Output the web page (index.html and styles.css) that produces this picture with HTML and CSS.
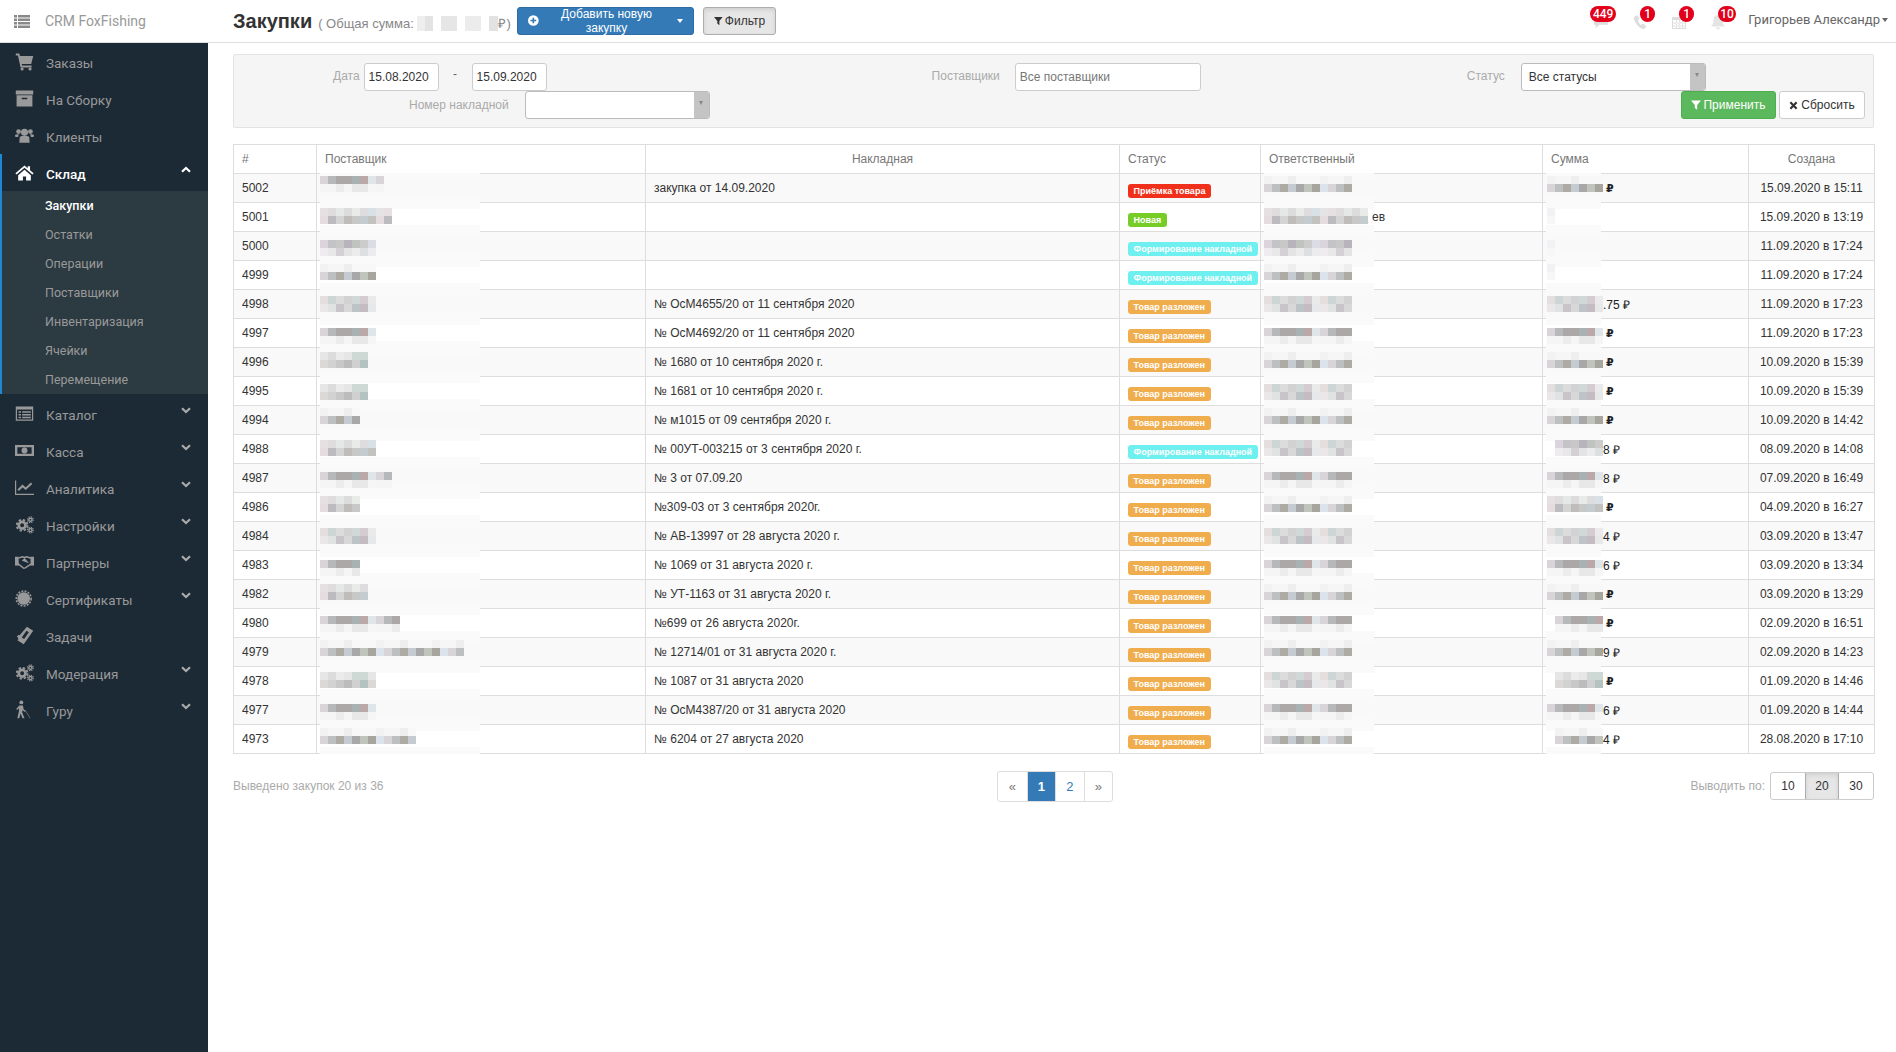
FILE: index.html
```html
<!DOCTYPE html>
<html lang="ru">
<head>
<meta charset="utf-8">
<title>Закупки</title>
<link rel="stylesheet" href="styles.css">
</head>
<body>
<svg class="defs" width="0" height="0" aria-hidden="true">
  <symbol id="i-cogs" viewBox="0 0 24 24">
    <circle cx="9" cy="13" r="4.2" fill="none" stroke="currentColor" stroke-width="3.4"/>
    <circle cx="9" cy="13" r="6.8" fill="none" stroke="currentColor" stroke-width="2.4" stroke-dasharray="3 2.34"/>
    <circle cx="19.5" cy="6" r="2" fill="none" stroke="currentColor" stroke-width="1.8"/>
    <circle cx="19.5" cy="6" r="3.6" fill="none" stroke="currentColor" stroke-width="1.4" stroke-dasharray="1.7 1.1"/>
    <circle cx="19.5" cy="19" r="2" fill="none" stroke="currentColor" stroke-width="1.8"/>
    <circle cx="19.5" cy="19" r="3.6" fill="none" stroke="currentColor" stroke-width="1.4" stroke-dasharray="1.7 1.1"/>
  </symbol>
  <symbol id="i-chev" viewBox="0 0 10 7">
    <path d="M1 1.2 5 5l4-3.8" fill="none" stroke="currentColor" stroke-width="2.2"/>
  </symbol>
  <symbol id="i-funnel" viewBox="0 0 10 10">
    <path d="M0 .5h10L6.2 5v4.8L3.8 8V5z" fill="currentColor"/>
  </symbol>
</svg>

<header class="topbar">
  <div class="brand">
    <svg class="brand-icon" viewBox="0 0 16 13"><path d="M0 0h3v2.5H0zM4 0h12v2.5H4zM0 3.5h3V6H0zM4 3.5h12V6H4zM0 7h3v2.5H0zM4 7h12v2.5H4zM0 10.500h3V13H0zM4 10.500h12V13H4z" fill="currentColor"/></svg>
    <span>CRM FoxFishing</span>
  </div>
  <div class="page-head">
    <h1 class="page-title">Закупки</h1>
    <span class="total">( Общая сумма: <span class="total-blur"></span>₽)</span>
    <button class="btn btn-blue btn-add"><svg class="ic-plus" viewBox="0 0 12 12"><circle cx="6" cy="6" r="6" fill="currentColor"/><path d="M6 2.800v6.400M2.800 6h6.400" stroke="#337ab7" stroke-width="1.800"/></svg>Добавить новую закупку<i class="caret"></i></button>
    <button class="btn btn-pressed btn-filter"><svg class="ic-funnel"><use href="#i-funnel"/></svg>Фильтр</button>
  </div>
  <div class="top-right">
    <div class="notif"><svg viewBox="0 0 18 16"><path d="M1 1h16v10H7l-4 4v-4H1z" fill="currentColor"/></svg><b class="badge badge-wide">449</b></div>
    <div class="notif"><svg viewBox="0 0 16 16"><path d="M5 1 2 3c-1 4 5 12 10 12l2.500-2.500L11 9.500l-2 1.500C7.500 10 6 7.500 6 6l1.500-1.500z" fill="currentColor"/></svg><b class="badge">1</b></div>
    <div class="notif"><svg viewBox="0 0 16 16"><path d="M1 3h14v12H1zM2 6v8h12V6zM5 6v8h1V6zM8 6v8h1V6zM11 6v8h1V6zM2 8.500h12v1H2zM2 11.500h12v1H2z" fill="currentColor" fill-rule="evenodd"/></svg><b class="badge">1</b></div>
    <div class="notif"><svg viewBox="0 0 16 16"><path d="M8 1c3 0 4.500 2 4.500 5 0 3.500 1 5 2.500 6.500H1C2.500 11 3.500 9.500 3.500 6 3.500 3 5 1 8 1zM6 13.500h4a2 2 0 0 1-4 0z" fill="currentColor" opacity=".8"/></svg><b class="badge">10</b></div>
    <div class="user">Григорьев Александр<i class="caret"></i></div>
  </div>
</header>

<div class="layout">
  <nav class="sidebar">
    <a class="nav-item"><svg class="nav-ic" viewBox="0 0 24 24"><path d="M1 2h4.500l.8 3H23l-2.500 10H8.500l.5 2h12v2.500H7L3.700 4.500H1z" fill="currentColor"/><circle cx="9" cy="21.500" r="2" fill="currentColor"/><circle cx="19" cy="21.500" r="2" fill="currentColor"/></svg><span>Заказы</span></a>
    <a class="nav-item"><svg class="nav-ic" viewBox="0 0 24 24"><path d="M1 2h22v5H1zM2 8h20v14H2zM8.500 11v2h7v-2z" fill="currentColor" fill-rule="evenodd"/></svg><span>На Сборку</span></a>
    <a class="nav-item"><svg class="nav-ic" viewBox="0 0 24 24"><circle cx="12" cy="8" r="4.500" fill="currentColor"/><circle cx="4.500" cy="7" r="3" fill="currentColor"/><circle cx="19.500" cy="7" r="3" fill="currentColor"/><path d="M6 14c0-1 2-1.500 6-1.500s6 .5 6 1.500l.5 7h-13zM0 11.500c1-1 3-1.500 5-1-.5 1-1 2-1 3.500H.5zM24 11.500c-1-1-3-1.500-5-1 .5 1 1 2 1 3.500h3.500z" fill="currentColor"/></svg><span>Клиенты</span></a>
    <div class="nav-group">
      <a class="nav-item is-open"><svg class="nav-ic" viewBox="0 0 24 24"><path d="M12 3 .5 13l1.500 1.500L12 6l10 8.500 1.500-1.500L19 9V4h-3v2.500zM4 15.500 12 8.500l8 7V22h-6v-5h-4v5H4z" fill="currentColor"/></svg><span>Склад</span><svg class="chev chev-up"><use href="#i-chev"/></svg></a>
      <ul class="sub">
        <li class="is-active">Закупки</li>
        <li>Остатки</li>
        <li>Операции</li>
        <li>Поставщики</li>
        <li>Инвентаризация</li>
        <li>Ячейки</li>
        <li>Перемещение</li>
      </ul>
    </div>
    <a class="nav-item after-group"><svg class="nav-ic" viewBox="0 0 24 24"><path d="M1 3h22v18H1zM2.500 7v12.500h19V7zM4.500 9h3v2h-3zM9 9h11v2H9zM4.500 12.500h3v2h-3zM9 12.500h11v2H9zM4.500 16h3v2h-3zM9 16h11v2H9z" fill="currentColor" fill-rule="evenodd"/></svg><span>Каталог</span><svg class="chev"><use href="#i-chev"/></svg></a>
    <a class="nav-item"><svg class="nav-ic" viewBox="0 0 24 24"><path d="M0 5h24v14H0zM3 8v8h18V8zM12 8.200a3.800 3.800 0 1 1 0 7.600 3.800 3.800 0 0 1 0-7.600z" fill="currentColor" fill-rule="evenodd"/></svg><span>Касса</span><svg class="chev"><use href="#i-chev"/></svg></a>
    <a class="nav-item"><svg class="nav-ic" viewBox="0 0 24 24"><path d="M0 3h1.500v17H24v1.500H0z" fill="currentColor"/><path d="M4 15.500 9.500 10l4 3.500L21 6.500" fill="none" stroke="currentColor" stroke-width="2.600"/></svg><span>Аналитика</span><svg class="chev"><use href="#i-chev"/></svg></a>
    <a class="nav-item"><svg class="nav-ic"><use href="#i-cogs"/></svg><span>Настройки</span><svg class="chev"><use href="#i-chev"/></svg></a>
    <a class="nav-item"><svg class="nav-ic" viewBox="0 0 24 24"><path d="M0 7h3.500v9H0zM20.500 7H24v9h-3.500zM3.500 8 9 6l3 1 3-1 5.500 2v7l-7.500 5-2 .5L4 15z" fill="none" stroke="currentColor" stroke-width="1.800"/><path d="M0 7h3v9H0zM21 7h3v9h-3zM9 11l3-3 5 6" fill="currentColor" stroke="currentColor"/></svg><span>Партнеры</span><svg class="chev"><use href="#i-chev"/></svg></a>
    <a class="nav-item"><svg class="nav-ic" viewBox="0 0 24 24"><circle cx="11" cy="12" r="8" fill="currentColor"/><circle cx="11" cy="12" r="9.400" fill="none" stroke="currentColor" stroke-width="2" stroke-dasharray="2.500 1.600"/></svg><span>Сертификаты</span><svg class="chev"><use href="#i-chev"/></svg></a>
    <a class="nav-item no-chev"><svg class="nav-ic" viewBox="0 0 24 24"><path d="M15 1l8 5-12 17-8-5c1-1 1.500-2 1-3L2.500 13.500 4 11.500c1 .5 2 .5 3-1zM14.500 6 8.500 14.500l3 2L17.500 8z" fill="currentColor" fill-rule="evenodd"/></svg><span>Задачи</span></a>
    <a class="nav-item"><svg class="nav-ic"><use href="#i-cogs"/></svg><span>Модерация</span><svg class="chev"><use href="#i-chev"/></svg></a>
    <a class="nav-item"><svg class="nav-ic" viewBox="0 0 24 24"><circle cx="8" cy="3" r="2.500" fill="currentColor"/><path d="M5.500 7h4.500l1 5 2.500 1.500-1 1.500-3-2-.5 2.500 3 7.500H9.500L7 17l-1.500 6H3l2-9V10L3 12.500 1.500 11.500z" fill="currentColor"/><path d="M13 13l6 10" stroke="currentColor" stroke-width=".7"/></svg><span>Гуру</span><svg class="chev"><use href="#i-chev"/></svg></a>
  </nav>

  <main class="content">
    <form class="filter-panel">
      <div class="filter-row">
        <label class="f-label f-date">Дата</label>
        <input class="field field-date" value="15.08.2020">
        <span class="dash">-</span>
        <input class="field field-date" value="15.09.2020">
        <label class="f-label f-supplier">Поставщики</label>
        <input class="field field-supplier" placeholder="Все поставщики">
        <label class="f-label f-status">Статус</label>
        <div class="select"><span>Все статусы</span><i class="select-arrow"></i></div>
      </div>
      <div class="filter-row">
        <label class="f-label f-number">Номер накладной</label>
        <div class="select"><span></span><i class="select-arrow"></i></div>
        <button class="btn btn-green"><svg class="ic-funnel"><use href="#i-funnel"/></svg>Применить</button>
        <button class="btn btn-white"><svg class="ic-x" viewBox="0 0 10 10"><path d="M1.500 1.500l7 7M8.500 1.500l-7 7" stroke="currentColor" stroke-width="2.400"/></svg>Сбросить</button>
      </div>
    </form>

    <table class="grid">
      <colgroup>
        <col class="c-id"><col class="c-sup"><col class="c-inv"><col class="c-st"><col class="c-resp"><col class="c-sum"><col class="c-date">
      </colgroup>
      <thead>
        <tr><th>#</th><th>Поставщик</th><th class="center">Накладная</th><th>Статус</th><th>Ответственный</th><th>Сумма</th><th class="center">Создана</th></tr>
      </thead>
      <tbody>
        <tr><td>5002</td><td class="sup"><i class="halo"></i><i class="mos m2" style="width:64px"></i></td><td>закупка от 14.09.2020</td><td><span class="label l-red">Приёмка товара</span></td><td class="resp"><i class="halo"></i><i class="mos m1" style="width:88px"></i></td><td class="sum"><i class="halo"></i><i class="mos m1" style="width:56px"></i><span class="rub">₽</span></td><td class="center">15.09.2020 в 15:11</td></tr>
        <tr><td>5001</td><td class="sup"><i class="halo"></i><i class="mos m3" style="width:72px"></i></td><td></td><td><span class="label l-green">Новая</span></td><td class="resp"><i class="halo"></i><i class="mos m3 wide" style="width:104px"></i><span class="resp-tail">ев</span></td><td class="sum"><i class="halo"></i><i class="mos m7" style="width:8px"></i></td><td class="center">15.09.2020 в 13:19</td></tr>
        <tr><td>5000</td><td class="sup"><i class="halo"></i><i class="mos m4" style="width:56px"></i></td><td></td><td><span class="label l-cyan">Формирование накладной</span></td><td class="resp"><i class="halo"></i><i class="mos m4" style="width:88px"></i></td><td class="sum"><i class="halo"></i><i class="mos m7" style="width:8px"></i></td><td class="center">11.09.2020 в 17:24</td></tr>
        <tr><td>4999</td><td class="sup"><i class="halo"></i><i class="mos m1" style="width:56px"></i></td><td></td><td><span class="label l-cyan">Формирование накладной</span></td><td class="resp"><i class="halo"></i><i class="mos m1" style="width:88px"></i></td><td class="sum"><i class="halo"></i><i class="mos m7" style="width:8px"></i></td><td class="center">11.09.2020 в 17:24</td></tr>
        <tr><td>4998</td><td class="sup"><i class="halo"></i><i class="mos m5" style="width:56px"></i></td><td>№ ОсМ4655/20 от 11 сентября 2020</td><td><span class="label l-orange">Товар разложен</span></td><td class="resp"><i class="halo"></i><i class="mos m5" style="width:88px"></i></td><td class="sum"><i class="halo"></i><i class="mos m5" style="width:56px"></i><span class="rub tail">.75 ₽</span></td><td class="center">11.09.2020 в 17:23</td></tr>
        <tr><td>4997</td><td class="sup"><i class="halo"></i><i class="mos m2" style="width:56px"></i></td><td>№ ОсМ4692/20 от 11 сентября 2020</td><td><span class="label l-orange">Товар разложен</span></td><td class="resp"><i class="halo"></i><i class="mos m2" style="width:88px"></i></td><td class="sum"><i class="halo"></i><i class="mos m2" style="width:56px"></i><span class="rub">₽</span></td><td class="center">11.09.2020 в 17:23</td></tr>
        <tr><td>4996</td><td class="sup"><i class="halo"></i><i class="mos m6" style="width:48px"></i></td><td>№ 1680 от 10 сентября 2020 г.</td><td><span class="label l-orange">Товар разложен</span></td><td class="resp"><i class="halo"></i><i class="mos m1" style="width:88px"></i></td><td class="sum"><i class="halo"></i><i class="mos m1" style="width:56px"></i><span class="rub">₽</span></td><td class="center">10.09.2020 в 15:39</td></tr>
        <tr><td>4995</td><td class="sup"><i class="halo"></i><i class="mos m6" style="width:48px"></i></td><td>№ 1681 от 10 сентября 2020 г.</td><td><span class="label l-orange">Товар разложен</span></td><td class="resp"><i class="halo"></i><i class="mos m5" style="width:88px"></i></td><td class="sum"><i class="halo"></i><i class="mos m5" style="width:56px"></i><span class="rub">₽</span></td><td class="center">10.09.2020 в 15:39</td></tr>
        <tr><td>4994</td><td class="sup"><i class="halo"></i><i class="mos m1" style="width:40px"></i></td><td>№ м1015 от 09 сентября 2020 г.</td><td><span class="label l-orange">Товар разложен</span></td><td class="resp"><i class="halo"></i><i class="mos m1" style="width:88px"></i></td><td class="sum"><i class="halo"></i><i class="mos m1" style="width:56px"></i><span class="rub">₽</span></td><td class="center">10.09.2020 в 14:42</td></tr>
        <tr><td>4988</td><td class="sup"><i class="halo"></i><i class="mos m3" style="width:56px"></i></td><td>№ 00УТ-003215 от 3 сентября 2020 г.</td><td><span class="label l-cyan">Формирование накладной</span></td><td class="resp"><i class="halo"></i><i class="mos m5" style="width:88px"></i></td><td class="sum"><i class="halo"></i><i class="mos m4 short" style="width:48px"></i><span class="rub tail">8 ₽</span></td><td class="center">08.09.2020 в 14:08</td></tr>
        <tr><td>4987</td><td class="sup"><i class="halo"></i><i class="mos m2" style="width:72px"></i></td><td>№ 3 от 07.09.20</td><td><span class="label l-orange">Товар разложен</span></td><td class="resp"><i class="halo"></i><i class="mos m2" style="width:88px"></i></td><td class="sum"><i class="halo"></i><i class="mos m2" style="width:56px"></i><span class="rub tail">8 ₽</span></td><td class="center">07.09.2020 в 16:49</td></tr>
        <tr><td>4986</td><td class="sup"><i class="halo"></i><i class="mos m3" style="width:40px"></i></td><td>№309-03 от 3 сентября 2020г.</td><td><span class="label l-orange">Товар разложен</span></td><td class="resp"><i class="halo"></i><i class="mos m1" style="width:88px"></i></td><td class="sum"><i class="halo"></i><i class="mos m3" style="width:56px"></i><span class="rub">₽</span></td><td class="center">04.09.2020 в 16:27</td></tr>
        <tr><td>4984</td><td class="sup"><i class="halo"></i><i class="mos m5" style="width:56px"></i></td><td>№ АВ-13997 от 28 августа 2020 г.</td><td><span class="label l-orange">Товар разложен</span></td><td class="resp"><i class="halo"></i><i class="mos m5" style="width:88px"></i></td><td class="sum"><i class="halo"></i><i class="mos m5" style="width:56px"></i><span class="rub tail">4 ₽</span></td><td class="center">03.09.2020 в 13:47</td></tr>
        <tr><td>4983</td><td class="sup"><i class="halo"></i><i class="mos m2" style="width:40px"></i></td><td>№ 1069 от 31 августа 2020 г.</td><td><span class="label l-orange">Товар разложен</span></td><td class="resp"><i class="halo"></i><i class="mos m2" style="width:88px"></i></td><td class="sum"><i class="halo"></i><i class="mos m2" style="width:56px"></i><span class="rub tail">6 ₽</span></td><td class="center">03.09.2020 в 13:34</td></tr>
        <tr><td>4982</td><td class="sup"><i class="halo"></i><i class="mos m3" style="width:48px"></i></td><td>№ УТ-1163 от 31 августа 2020 г.</td><td><span class="label l-orange">Товар разложен</span></td><td class="resp"><i class="halo"></i><i class="mos m1" style="width:88px"></i></td><td class="sum"><i class="halo"></i><i class="mos m1" style="width:56px"></i><span class="rub">₽</span></td><td class="center">03.09.2020 в 13:29</td></tr>
        <tr><td>4980</td><td class="sup"><i class="halo"></i><i class="mos m2" style="width:80px"></i></td><td>№699 от 26 августа 2020г.</td><td><span class="label l-orange">Товар разложен</span></td><td class="resp"><i class="halo"></i><i class="mos m2" style="width:88px"></i></td><td class="sum"><i class="halo"></i><i class="mos m2 short" style="width:48px"></i><span class="rub">₽</span></td><td class="center">02.09.2020 в 16:51</td></tr>
        <tr><td>4979</td><td class="sup"><i class="halo"></i><i class="mos m1" style="width:144px"></i></td><td>№ 12714/01 от 31 августа 2020 г.</td><td><span class="label l-orange">Товар разложен</span></td><td class="resp"><i class="halo"></i><i class="mos m1" style="width:88px"></i></td><td class="sum"><i class="halo"></i><i class="mos m1" style="width:56px"></i><span class="rub tail">9 ₽</span></td><td class="center">02.09.2020 в 14:23</td></tr>
        <tr><td>4978</td><td class="sup"><i class="halo"></i><i class="mos m6" style="width:56px"></i></td><td>№ 1087 от 31 августа 2020</td><td><span class="label l-orange">Товар разложен</span></td><td class="resp"><i class="halo"></i><i class="mos m5" style="width:88px"></i></td><td class="sum"><i class="halo"></i><i class="mos m6 short" style="width:48px"></i><span class="rub">₽</span></td><td class="center">01.09.2020 в 14:46</td></tr>
        <tr><td>4977</td><td class="sup"><i class="halo"></i><i class="mos m2" style="width:56px"></i></td><td>№ ОсМ4387/20 от 31 августа 2020</td><td><span class="label l-orange">Товар разложен</span></td><td class="resp"><i class="halo"></i><i class="mos m2" style="width:88px"></i></td><td class="sum"><i class="halo"></i><i class="mos m2" style="width:56px"></i><span class="rub tail">6 ₽</span></td><td class="center">01.09.2020 в 14:44</td></tr>
        <tr><td>4973</td><td class="sup"><i class="halo"></i><i class="mos m1" style="width:96px"></i></td><td>№ 6204 от 27 августа 2020</td><td><span class="label l-orange">Товар разложен</span></td><td class="resp"><i class="halo"></i><i class="mos m1" style="width:88px"></i></td><td class="sum"><i class="halo"></i><i class="mos m1 short" style="width:48px"></i><span class="rub tail">4 ₽</span></td><td class="center">28.08.2020 в 17:10</td></tr>
      </tbody>
    </table>

    <div class="footer-row">
      <div class="count">Выведено закупок 20 из 36</div>
      <div class="pager"><a class="muted">«</a><a class="current">1</a><a>2</a><a class="muted">»</a></div>
      <div class="per-page"><span class="per-label">Выводить по:</span><div class="per-group"><a>10</a><a class="current">20</a><a>30</a></div></div>
    </div>
  </main>
</div>
</body>
</html>
```
FILE: styles.css
```css
* { box-sizing: border-box; }
html, body { margin: 0; padding: 0; }
body { font-family: "Liberation Sans", Arial, sans-serif; font-size: 12px; color: #333; background: #fff; }
.defs { position: absolute; }

/* top bar */
.topbar { display: flex; align-items: center; height: 43px; border-bottom: 1px solid #ddd; background: #fff; }
.brand { width: 208px; flex: none; display: flex; align-items: center; padding-left: 14px; font-family: Roboto, sans-serif; font-size: 14px; color: #999; height: 42px; }
.brand-icon { width: 16px; height: 13px; margin-right: 15px; color: #888; }
.page-head { display: flex; align-items: center; margin-left: 25px; height: 42px; }
.page-title { margin: 0 6px 0 0; font-size: 20px; font-weight: 700; color: #333; line-height: 42px; }
.total { font-size: 13px; color: #888; margin-top: 4px; width: 199px; white-space: nowrap; }
.total-blur { display: inline-block; width: 81px; height: 15px; vertical-align: -3px; background: linear-gradient(90deg, #eee 0 8px, #e3e3e3 8px 16px, #fff 16px 24px, #e6e6e6 24px 40px, #fff 40px 48px, #ececec 48px 64px, #fff 64px 72px, #e2e2e2 72px 81px); }

.btn { display: inline-flex; align-items: center; height: 28px; padding: 0 10px; border: 1px solid #ccc; border-radius: 3px; font: 12px "Liberation Sans", Arial, sans-serif; color: #333; background: #fff; }
.btn-blue { background: #337ab7; border-color: #2e6da4; color: #fff; }
.btn-pressed { background: #e6e6e6; border-color: #adadad; box-shadow: inset 0 2px 4px rgba(0, 0, 0, .1); }
.btn-green { background: #5cb85c; border-color: #4cae4c; color: #fff; }
.btn-add { width: 177px; margin-top: -1px; margin-right: 9px; }
.btn-filter { width: 73px; margin-top: -1px; }
.ic-plus { width: 11px; height: 11px; margin-right: 2px; color: #fff; }
.ic-funnel { width: 10px; height: 10px; margin-right: 2px; }
.ic-x { width: 9px; height: 9px; margin-right: 3px; }
.caret { display: inline-block; margin-left: 5px; border-top: 4px solid currentColor; border-left: 3px solid transparent; border-right: 3px solid transparent; }

.top-right { display: flex; align-items: center; margin-left: auto; height: 42px; padding-right: 8px; }
.notif { position: relative; width: 18px; height: 18px; margin-right: 21px; margin-top: 4px; color: #ddd; }
.notif svg { display: block; width: 16px; height: 16px; }
.badge { position: absolute; left: 8px; top: -8px; min-width: 15px; height: 16px; padding: 0 2px; border-radius: 8px; background: #e2001a; color: #fff; font: 500 12px/16px Roboto, sans-serif; text-align: center; }
.badge-wide { left: -3px; min-width: 26px; }
.user { font-family: Roboto, sans-serif; font-size: 13px; color: #666; margin-left: -1px; margin-top: -4px; white-space: nowrap; }
.user .caret { margin-left: 2px; vertical-align: 2px; }

/* layout */
.layout { display: flex; min-height: 1009px; }
.sidebar { width: 208px; flex: none; background: #1c2a36; font-family: Roboto, sans-serif; font-size: 13.500px; color: #999; }
.nav-item { display: flex; align-items: center; height: 37px; padding: 2px 17px 0 15px; }
.nav-ic { width: 19px; height: 19px; flex: none; margin-right: 12px; color: #999; margin-top: -2px; }
.nav-item span { flex: 1; }
.chev { width: 10px; height: 7px; margin-top: -8px; color: #aaa; }
.chev-up { transform: rotate(180deg); color: #fff; }
.nav-group { border-left: 2px solid #1e88d4; }
.nav-group .nav-item { padding-left: 13px; }
.is-open { color: #fff; font-weight: 500; }
.is-open .nav-ic { color: #fff; }
.sub { list-style: none; margin: 0; padding: 0; background: #2c3a42; font-size: 12.500px; }
.sub li { height: 29px; line-height: 29px; padding-left: 43px; }
.sub .is-active { color: #fff; font-weight: 500; }
.after-group { margin-top: 1px; }

/* content */
.content { flex: 1; padding: 11px 22px 0 25px; min-width: 0; }
.filter-panel { height: 74px; padding-top: 8px; background: #f5f5f5; border: 1px solid #e3e3e3; border-radius: 2px; }
.filter-row { display: flex; align-items: center; height: 28px; }
.f-label { color: #aaa; white-space: nowrap; }
.f-date { margin-left: 99px; margin-right: 4px; margin-top: -2px; }
.dash { width: 33px; text-align: center; color: #666; margin-top: -6px; }
.f-supplier { margin-left: 385px; margin-right: 15px; margin-top: -2px; }
.f-status { margin-left: 266px; margin-right: 16px; margin-top: -2px; }
.f-number { margin-left: 175px; margin-right: 16px; }
.field { height: 28px; border: 1px solid #ccc; border-radius: 3px; padding: 0 4px; font: 12px "Liberation Sans", Arial, sans-serif; color: #333; background: #fff; outline: none; }
.field::placeholder { color: #777; opacity: 1; }
.field-date { width: 75px; }
.field-supplier { width: 186px; }
.select { display: flex; align-items: center; justify-content: space-between; width: 185px; height: 28px; padding-left: 7px; border: 1px solid #bbb; border-radius: 3px; background: #fff; overflow: hidden; }
.select-arrow { position: relative; width: 15px; height: 100%; background: #c4c4c4; }
.select-arrow::after { content: ""; position: absolute; left: 5px; top: 9px; border-top: 4px solid #888; border-left: 2.500px solid transparent; border-right: 2.500px solid transparent; }
.btn-green { width: 95px; margin-left: auto; justify-content: center; padding: 0; }
.btn-white { width: 86px; margin-left: 3px; margin-right: 8px; justify-content: center; padding: 0; }

/* table */
.grid { width: 100%; margin-top: 16px; border-collapse: collapse; table-layout: fixed; border: 1px solid #ddd; }
.c-id { width: 83px; } .c-sup { width: 329px; } .c-inv { width: 474px; } .c-st { width: 141px; }
.c-resp { width: 282px; } .c-sum { width: 206px; } .c-date { width: 126px; }
.grid th, .grid td { height: 29px; padding: 0 8px; border: 1px solid #ddd; text-align: left; font-weight: 400; white-space: nowrap; }
.grid th { color: #777; background: #fff; }
.grid th.center, .grid td.center { text-align: center; }
.grid tbody tr:nth-child(odd) td { background: #f9f9f9; }
.sup, .resp, .sum { position: relative; }
.halo { position: absolute; top: -1px; bottom: -1px; left: 3px; border-top: 7px solid #fafafa; border-bottom: 7px solid #fafafa; }
.sup .halo { width: 160px; }
.resp .halo { width: 110px; }
.sum .halo { width: 55px; }
.mos { position: absolute; left: 3px; height: 16px; --a: #e8e4e6; --b: #bbb;
  background: var(--t) left top / 100% 8px no-repeat, var(--u) left bottom / 100% 8px no-repeat; }
.sum .mos { left: 4px; }
.sum .mos.short { left: 12px; }
tbody tr:nth-child(8n+1) .mos { top: 2px; }
tbody tr:nth-child(8n+2) .mos { top: 5px; }
tbody tr:nth-child(8n+3) .mos { top: 8px; }
tbody tr:nth-child(8n+4) .mos { top: 3px; }
tbody tr:nth-child(8n+5) .mos { top: 6px; }
tbody tr:nth-child(8n+6) .mos { top: 9px; }
tbody tr:nth-child(8n+7) .mos { top: 4px; }
tbody tr:nth-child(8n+8) .mos { top: 7px; }
.m1 { --t: repeating-linear-gradient(90deg, #f2f2f2 0 8px, #f6f6f6 8px 24px, #eee 24px 32px, #f8f8f8 32px 56px);
      --u: repeating-linear-gradient(90deg, #d8d4d8 0 8px, #bcc0c0 8px 16px, #aeaaa4 16px 24px, #c4ccd2 24px 32px, #a8a8a8 32px 40px, #c0c4bc 40px 48px, #a6a69e 48px 56px, #dde3ea 56px 64px); }
.m2 { --t: repeating-linear-gradient(90deg, #d8d4d8 0 8px, #b6b8ba 8px 16px, #aca8a8 16px 32px, #a8b2b2 32px 40px, #bba8a8 40px 48px, #dfe6ea 48px 56px);
      --u: repeating-linear-gradient(90deg, #f5f5f5 0 16px, #ececec 16px 24px, #f5f5f5 24px 32px, #e8e8e8 32px 48px, #f6f6f6 48px 56px); }
.m3 { --t: repeating-linear-gradient(90deg, #e6e0e2 0 8px, #dedcdc 8px 16px, #e4e8e6 16px 24px, #dcdcdc 24px 32px, #e8ebe8 32px 40px, #dedcde 40px 48px, #d8e2e6 48px 56px, #e4e4e4 56px 64px);
      --u: repeating-linear-gradient(90deg, #e4dcde 0 8px, #bcbcc0 8px 16px, #d4d4d4 16px 24px, #c0bcbc 24px 32px, #c8c8c8 32px 40px, #c4ccd0 40px 48px, #c2c2c0 48px 56px); }
.m4 { --t: repeating-linear-gradient(90deg, #dcd4dc 0 8px, #c4c4c8 8px 16px, #c8c8c8 16px 24px, #b8b4bc 24px 32px, #c0c4c0 32px 40px, #cccccc 40px 48px, #dcdce4 48px 56px);
      --u: repeating-linear-gradient(90deg, #eeecee 0 8px, #e8e8e8 8px 16px, #d4d0d4 16px 24px, #e4e4e4 24px 32px, #ececec 32px 40px, #dce0e0 40px 48px, #ecebee 48px 56px); }
.m5 { --t: repeating-linear-gradient(90deg, #e4dede 0 8px, #cdd6d4 8px 16px, #dcdcdc 16px 24px, #d2d2d2 24px 32px, #d0d8d8 32px 40px, #d4ccd0 40px 48px, #eaeaea 48px 56px);
      --u: repeating-linear-gradient(90deg, #ebe6e8 0 8px, #dfe4e2 8px 16px, #c8c4c8 16px 24px, #d8d8d8 24px 32px, #bcc4c8 32px 40px, #c4bcc0 40px 48px, #e6e8ea 48px 56px); }
.m6 { --t: repeating-linear-gradient(90deg, #e6e6e6 0 8px, #dcdcdc 8px 16px, #ebebeb 16px 24px, #e6e6e6 24px 32px, #ced8d4 32px 48px);
      --u: repeating-linear-gradient(90deg, #dcd8d8 0 8px, #d2d2d2 8px 16px, #c8c8c8 16px 24px, #bcbcbc 24px 32px, #d0d0d0 32px 40px, #b4c2c0 40px 48px); }
.m7 { --t: linear-gradient(#f2f2f4, #f2f2f4); --u: linear-gradient(#f7f7f8, #f7f7f8); }
.resp-tail { display: inline-block; position: relative; padding-left: 103px; }
.rub { display: inline-block; position: relative; padding-left: 55px; font-family: "DejaVu Sans", sans-serif; font-size: 11px; font-weight: 700; color: #222; }
.rub.tail { padding-left: 52px; font-family: "Liberation Sans", Arial, sans-serif; font-size: 12px; font-weight: 400; }

.label { display: inline-block; height: 14px; margin-top: 5px; padding: 0 5.500px; border-radius: 3px; color: #fff; font-size: 9px; font-weight: 700; line-height: 14px; vertical-align: middle; }
.l-red { background: #f0301a; }
.l-green { background: #78cc28; }
.l-cyan { background: #6ff0f0; }
.l-orange { background: #f0ad4e; }

/* footer */
.footer-row { display: flex; align-items: flex-start; margin-top: 17px; }
.count { width: 764px; padding-top: 8px; color: #aaa; }
.pager { display: flex; height: 31px; border: 1px solid #ddd; border-radius: 3px; font-size: 13px; }
.pager a { width: 28.500px; line-height: 29px; text-align: center; color: #337ab7; border-left: 1px solid #ddd; }
.pager a:first-child { border-left: 0; }
.pager .muted { color: #777; }
.pager .current { background: #337ab7; color: #fff; font-weight: 700; }
.per-page { display: flex; align-items: center; margin-left: auto; margin-top: 1px; }
.per-label { margin-right: 5px; color: #aaa; }
.per-group { display: flex; height: 28px; border: 1px solid #ccc; border-radius: 3px; }
.per-group a { width: 34px; line-height: 26px; text-align: center; color: #333; }
.per-group .current { background: #e6e6e6; border-left: 1px solid #adadad; border-right: 1px solid #adadad; box-shadow: inset 0 2px 4px rgba(0, 0, 0, .1); }
```
